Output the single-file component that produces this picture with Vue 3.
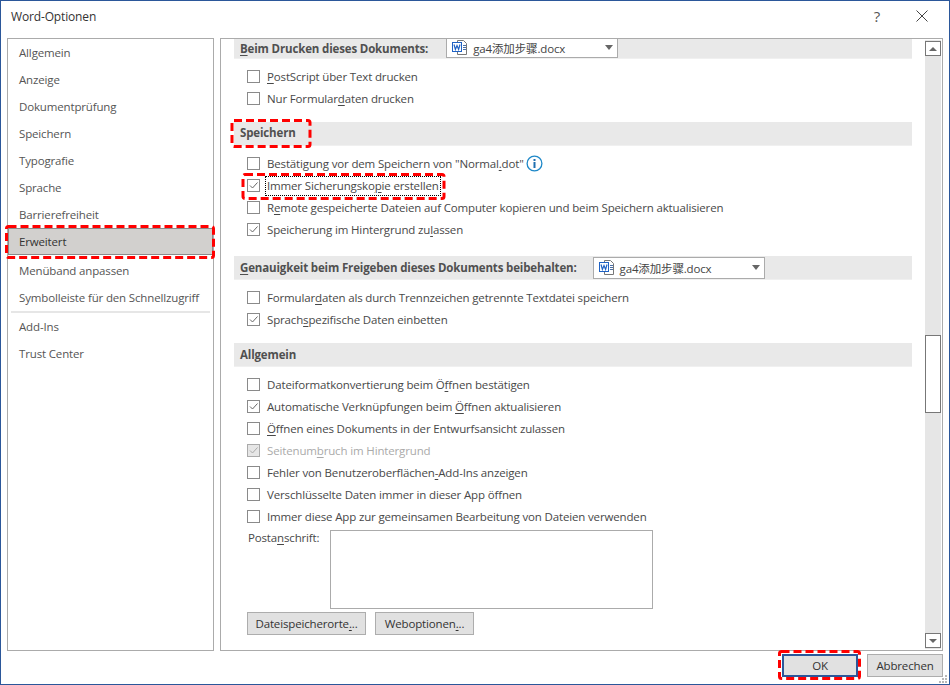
<script setup>
const nav = [
  { t: 'Allgemein' }, { t: 'Anzeige' }, { t: 'Dokumentprüfung' }, { t: 'Speichern' },
  { t: 'Typografie' }, { t: 'Sprache' }, { t: 'Barrierefreiheit' }, { t: 'Erweitert', active: true },
  { t: 'Menüband anpassen' }, { t: 'Symbolleiste für den Schnellzugriff', divider: true },
  { t: 'Add-Ins' }, { t: 'Trust Center' }
]
const parse = (s) => {
  const i = s.indexOf('&')
  return i < 0 ? [s, '', ''] : [s.slice(0, i), s[i + 1], s.slice(i + 2)]
}
const group1 = [
  { t: '&PostScript über Text drucken' },
  { t: 'Nur Formular&daten drucken' }
]
const group2 = [
  { t: 'Bestätigung vor dem Speichern von "Normal&.dot"', info: true },
  { t: 'Immer Sicherungsko&pie erstellen', on: true, focus: true },
  { t: 'R&emote gespeicherte Dateien auf Computer kopieren und beim Speichern aktualisieren' },
  { t: 'Speicherung im Hintergrund zu&lassen', on: true }
]
const group3 = [
  { t: 'Formular&daten als durch Trennzeichen getrennte Textdatei speichern' },
  { t: 'Sprach&spezifische Daten einbetten', on: true }
]
const group4 = [
  { t: 'Dateiformatkonvertierung beim Ö&ffnen bestätigen' },
  { t: 'Automatische Verknüpfungen beim &Öffnen aktualisieren', on: true },
  { t: '&Öffnen eines Dokuments in der Entwurfsansicht zulassen' },
  { t: 'Seitenum&bruch im Hintergrund', on: true, off: true },
  { t: 'Fehler von Benutzeroberflächen&-Add-Ins anzeigen' },
  { t: 'Verschlüsselte Daten immer in dieser App öffnen' },
  { t: 'Immer diese App zur gemeinsamen Bearbeitung von Dateien verwenden' }
]
const marks = [
  { x: 6.5, y: 226.5, w: 207, h: 31 },
  { x: 232, y: 120.5, w: 78, h: 26 },
  { x: 243, y: 174.5, w: 201, h: 24 },
  { x: 779.5, y: 651.5, w: 80, h: 27 }
]
</script>

<template>
  <div class="win">
    <header class="title">
      <span>Word-Optionen</span>
      <span class="help">?</span>
      <svg class="close" width="12" height="12" viewBox="0 0 12 12"><path d="M.5.5l11 11M11.5.5l-11 11" stroke="#444" fill="none"/></svg>
    </header>
    <div class="main">
      <nav class="nav">
        <template v-for="n in nav" :key="n.t">
          <div class="nav-item" :class="{ active: n.active }">{{ n.t }}</div>
          <div v-if="n.divider" class="nav-div"></div>
        </template>
      </nav>
      <section class="pane">
        <div class="content">
          <div class="sec first">
            <b><u>B</u>eim Drucken dieses Dokuments:</b>
            <div class="combo top">
              <svg width="16" height="18" viewBox="0 0 16 18"><path d="M5.5 1.5h6l3 3v11h-9z" fill="#fff" stroke="#777"/><path d="M11 6.5h3M11 8.5h3M11 10.5h3" stroke="#4a6fa5"/><rect x=".5" y="3.5" width="9" height="9" fill="#fff" stroke="#1f62c4"/><path d="M2 5.5l1.4 5 1.6-4 1.6 4 1.4-5" fill="none" stroke="#1f62c4" stroke-width="1.2"/></svg>
              <span class="combo-t">ga4添加步骤.docx</span>
              <i class="tri"></i>
            </div>
          </div>
          <div class="group">
            <div v-for="r in group1" :key="r.t" class="row">
              <span class="box"></span>
              <span class="lab"><template v-for="(p, i) in [parse(r.t)]" :key="i">{{ p[0] }}<u>{{ p[1] }}</u>{{ p[2] }}</template></span>
            </div>
          </div>
          <div class="sec raise"><b>Speichern</b></div>
          <div class="group">
            <div v-for="r in group2" :key="r.t" class="row">
              <span class="box" :class="{ on: r.on }">
                <svg v-if="r.on" width="11" height="11" viewBox="0 0 11 11"><path d="M2 5.5l2.5 2.5L9.5 2.5" fill="none" stroke="#666"/></svg>
              </span>
              <span class="lab" :class="{ focus: r.focus }"><template v-for="(p, i) in [parse(r.t)]" :key="i">{{ p[0] }}<u>{{ p[1] }}</u>{{ p[2] }}</template></span>
              <svg v-if="r.info" class="info" width="17" height="17" viewBox="0 0 17 17"><circle cx="8.5" cy="8.5" r="7.4" fill="#fff" stroke="#1e88c8" stroke-width="1.3"/><rect x="7.5" y="7" width="2" height="6" fill="#1e6fb0"/><rect x="7.5" y="4" width="2" height="2" fill="#1e6fb0"/></svg>
            </div>
          </div>
          <div class="sec second">
            <b><u>G</u>enauigkeit beim Freigeben dieses Dokuments beibehalten:</b>
            <div class="combo">
              <svg width="16" height="18" viewBox="0 0 16 18"><path d="M5.5 1.5h6l3 3v11h-9z" fill="#fff" stroke="#777"/><path d="M11 6.5h3M11 8.5h3M11 10.5h3" stroke="#4a6fa5"/><rect x=".5" y="3.5" width="9" height="9" fill="#fff" stroke="#1f62c4"/><path d="M2 5.5l1.4 5 1.6-4 1.6 4 1.4-5" fill="none" stroke="#1f62c4" stroke-width="1.2"/></svg>
              <span class="combo-t">ga4添加步骤.docx</span>
              <i class="tri"></i>
            </div>
          </div>
          <div class="group">
            <div v-for="r in group3" :key="r.t" class="row">
              <span class="box" :class="{ on: r.on }">
                <svg v-if="r.on" width="11" height="11" viewBox="0 0 11 11"><path d="M2 5.5l2.5 2.5L9.5 2.5" fill="none" stroke="#666"/></svg>
              </span>
              <span class="lab"><template v-for="(p, i) in [parse(r.t)]" :key="i">{{ p[0] }}<u>{{ p[1] }}</u>{{ p[2] }}</template></span>
            </div>
          </div>
          <div class="sec"><b>Allgemein</b></div>
          <div class="group">
            <div v-for="r in group4" :key="r.t" class="row" :class="{ off: r.off }">
              <span class="box" :class="{ on: r.on }">
                <svg v-if="r.on" width="11" height="11" viewBox="0 0 11 11"><path d="M2 5.5l2.5 2.5L9.5 2.5" fill="none" :stroke="r.off ? '#aaa' : '#666'"/></svg>
              </span>
              <span class="lab"><template v-for="(p, i) in [parse(r.t)]" :key="i">{{ p[0] }}<u>{{ p[1] }}</u>{{ p[2] }}</template></span>
            </div>
          </div>
          <div class="addr">
            <label>Posta<u>n</u>schrift:</label>
            <div class="area"></div>
          </div>
          <div class="btns">
            <button class="btn b1">Dateispeicherorte<u>.</u>..</button>
            <button class="btn b2">Weboptionen<u>.</u>..</button>
          </div>
        </div>
        <div class="sbar">
          <div class="sbtn"><i class="up"></i></div>
          <div class="thumb"></div>
          <div class="sbtn"><i class="down"></i></div>
        </div>
      </section>
    </div>
    <footer class="foot">
      <button class="fbtn ok">OK</button>
      <button class="fbtn">Abbrechen</button>
    </footer>
    <svg class="grip" width="9" height="9" viewBox="0 0 9 9" fill="#b8b8b8">
      <rect x="6" y="0" width="2" height="2"/><rect x="3" y="3" width="2" height="2"/><rect x="6" y="3" width="2" height="2"/>
      <rect x="0" y="6" width="2" height="2"/><rect x="3" y="6" width="2" height="2"/><rect x="6" y="6" width="2" height="2"/>
    </svg>
    <svg class="marks" width="950" height="685">
      <rect v-for="(m, i) in marks" :key="i" :x="m.x" :y="m.y" :width="m.w" :height="m.h" rx="2" fill="none" stroke="#f00" stroke-width="3" stroke-dasharray="8 4"/>
    </svg>
  </div>
</template>

<style scoped>
.win {
  position: relative;
  box-sizing: border-box;
  width: 950px;
  height: 685px;
  border: 1px solid #2b579a;
  background: #fff;
  color: #484848;
  font-family: "Open Sans", "Noto Sans CJK SC", sans-serif;
  font-size: 11.5px;
  letter-spacing: -0.15px;
  overflow: hidden;
  display: flex;
  flex-direction: column;
}
u { text-underline-offset: 2px; }
.title {
  height: 37px;
  flex: none;
  display: flex;
  align-items: center;
  padding: 0 21px 7px 10px;
  font-size: 12px;
  color: #333;
  box-sizing: border-box;
}
.help { margin-left: auto; margin-right: 36px; font-size: 15px; color: #555; }
.main {
  flex: none;
  height: 613px;
  display: flex;
  gap: 6px;
  padding: 0 6px;
}
.nav {
  width: 207px;
  box-sizing: border-box;
  border: 1px solid #ababab;
}
.nav-item {
  height: 27px;
  line-height: 28px;
  padding-left: 11px;
  color: #555;
}
.nav-item.active {
  background: #d2d0ce;
  border: 1px solid #8a8a8a;
  box-sizing: border-box;
  color: #333;
  margin-bottom: 2px;
  padding-left: 10px;
  line-height: 26px;
}
.nav-div {
  height: 2px;
  margin: 0 3px;
  background: #e6e6e6;
}
.pane {
  width: 723px;
  box-sizing: border-box;
  border: 1px solid #ababab;
  display: flex;
  overflow: hidden;
}
.content {
  width: 678px;
  margin-left: 13px;
  display: flex;
  flex-direction: column;
}
.sec {
  height: 24px;
  flex: none;
  box-sizing: border-box;
  background: #e9e9e9;
  border-bottom: 1px solid #f0f0f0;
  padding-left: 6px;
  display: flex;
  align-items: center;
  color: #505050;
  margin-top: 13px;
}
.sec b { font-weight: 700; }
.sec.raise { padding-bottom: 2px; }
.sec.first { height: 20px; margin-top: 0; }
.sec.second { margin-top: 16px; }
.combo {
  box-sizing: border-box;
  width: 172px;
  height: 22px;
  margin-left: 16px;
  background: #fff;
  border: 1px solid #ababab;
  display: flex;
  align-items: center;
  padding-left: 5px;
  gap: 5px;
  flex: none;
}
.combo.top {
  height: 20px;
  margin-left: 18px;
  align-self: flex-end;
  border-top: 0;
}
.combo-t { color: #444; font-weight: 400; }
.tri {
  margin-left: auto;
  margin-right: 4px;
  width: 0;
  height: 0;
  border-left: 4px solid transparent;
  border-right: 4px solid transparent;
  border-top: 5px solid #666;
}
.group { padding-top: 6px; }
.row {
  height: 22px;
  display: flex;
  align-items: center;
  padding-left: 13px;
}
.row.off { color: #aaa; }
.box {
  width: 13px;
  height: 13px;
  box-sizing: border-box;
  border: 1px solid #8a8a8a;
  flex: none;
  display: flex;
  align-items: center;
  justify-content: center;
  background: #fff;
}
.row.off .box { background: #e6e6e6; border-color: #aaa; }
.lab {
  margin: 2px 0 0 6px;
  padding: 0 1px;
  white-space: nowrap;
  line-height: 18px;
}
.lab.focus { outline: 1px dotted #000; outline-offset: 0; }
.info { margin-left: 1px; }
.addr {
  display: flex;
  padding: 3px 0 0 14px;
  height: 82px;
  box-sizing: border-box;
}
.addr label { width: 82px; flex: none; line-height: 16px; }
.area {
  width: 323px;
  height: 79px;
  box-sizing: border-box;
  border: 1px solid #ababab;
}
.btns {
  display: flex;
  gap: 9px;
  padding: 3px 0 0 13px;
}
.btn, .fbtn {
  font: inherit;
  letter-spacing: inherit;
  color: #333;
  background: #e1e1e1;
  border: 1px solid #adadad;
  padding: 0;
  box-sizing: border-box;
}
.btn { height: 23px; }
.b1 { width: 119px; }
.b2 { width: 99px; }
.sbar {
  width: 16px;
  margin-left: 13px;
  margin-top: 1px;
  height: 609px;
  background: #e6e6e6;
  position: relative;
  display: flex;
  flex-direction: column;
  justify-content: space-between;
  padding: 1px 0;
  box-sizing: border-box;
}
.sbtn {
  height: 15px;
  box-sizing: border-box;
  border: 1px solid #777;
  background: #fff;
  display: flex;
  align-items: center;
  justify-content: center;
}
.up, .down {
  width: 0;
  height: 0;
  border-left: 4px solid transparent;
  border-right: 4px solid transparent;
}
.up { border-bottom: 4px solid #666; }
.down { border-top: 4px solid #666; }
.thumb {
  position: absolute;
  left: 0;
  top: 295px;
  width: 16px;
  height: 78px;
  background: #fff;
  box-sizing: border-box;
  border: 1px solid #777;
}
.foot {
  flex: none;
  display: flex;
  justify-content: flex-end;
  gap: 9px;
  padding: 3px 6px 0 0;
}
.fbtn { width: 76px; height: 23px; }
.fbtn.ok { border: 2px solid #2b579a; }
.grip { position: absolute; right: 1px; bottom: 0; }
.marks { position: absolute; left: -1px; top: -1px; pointer-events: none; }
</style>
